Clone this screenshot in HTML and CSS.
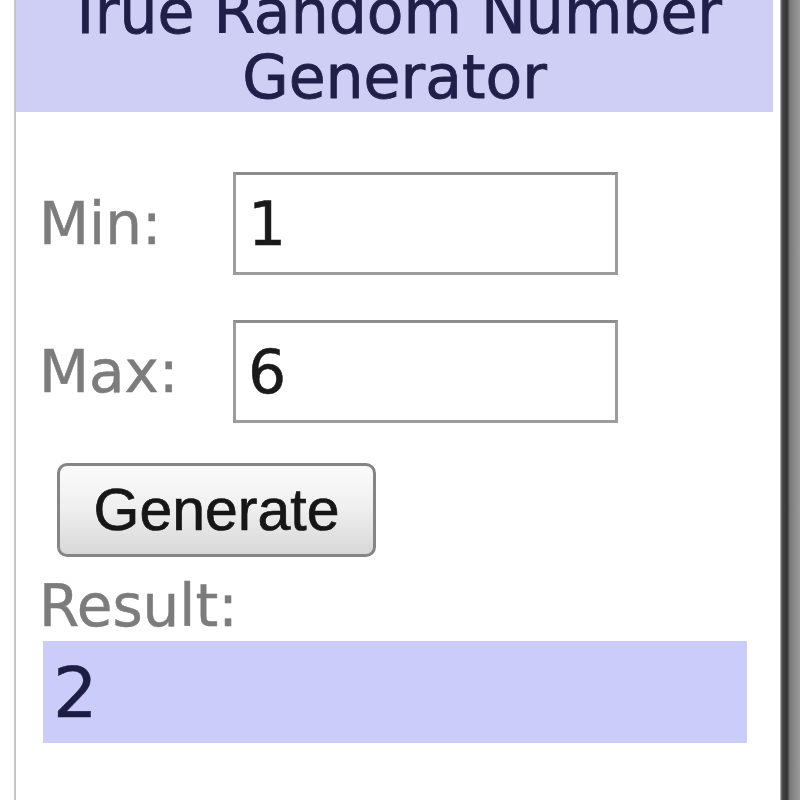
FILE: index.html
```html
<!DOCTYPE html>
<html lang="en">
<head>
    <meta charset="UTF-8">
    <title>True Random Number Generator</title>
    <link rel="stylesheet" href="styles.css">
</head>
<body>
    <div class="page">
        <div class="widget">
            <div class="header">
                <h1>True Random Number<br>Generator</h1>
            </div>

            <div class="fields">
                <label for="min">Min:</label>
                <input type="text" id="min" value="1">

                <label for="max">Max:</label>
                <input type="text" id="max" value="6">
            </div>

            <button class="generate">Generate</button>

            <div class="result-label">Result:</div>
            <div class="result">2</div>
        </div>
        <div class="edge"></div>
    </div>
</body>
</html>
```

FILE: styles.css
```css
:root {
    --header-bg: #cfcff6;
    --result-bg: #ccccfa;
    --title-color: #1f1f48;
    --label-color: #7c7c7c;
    --input-border: #9c9c9c;
}

body {
    margin: 0;
    background-color: #ffffff;
    font-family: 'DejaVu Sans', Verdana, sans-serif;
    overflow: hidden;
}

.page {
    display: flex;
    height: 800px;
    padding-left: 14px;
}

.widget {
    width: 757px;
    padding-right: 7px;
    border-left: 2px solid #c6c6c6;
    background-color: #ffffff;
}

.edge {
    flex: 1;
    background: linear-gradient(to right, #d0d0d0 0, #4a4a4a 2px, #333333 7px, #7a7a7a 10px, #9a9a9a 20px);
}

.header {
    height: 112px;
    background-color: var(--header-bg);
    display: flex;
    align-items: flex-end;
    justify-content: center;
    overflow: hidden;
}

.header h1 {
    margin: 0 0 2px;
    font-size: 60px;
    font-weight: normal;
    line-height: 65px;
    text-align: center;
    color: var(--title-color);
    -webkit-text-stroke: 0.8px var(--title-color);
    white-space: nowrap;
}

.fields {
    display: grid;
    grid-template-columns: 190px 385px;
    row-gap: 45px;
    align-items: center;
    margin: 60px 0 0 27px;
}

.fields label {
    font-size: 58px;
    color: var(--label-color);
    -webkit-text-stroke: 0.5px var(--label-color);
    margin-left: -4px;
}

.fields input {
    box-sizing: border-box;
    height: 103px;
    width: 385px;
    padding: 0 12px;
    border: 3px solid var(--input-border);
    border-top-color: #8c8c8c;
    font-family: 'DejaVu Sans', Verdana, sans-serif;
    font-size: 60px;
    color: #1a1a1a;
    -webkit-text-stroke: 0.5px #1a1a1a;
    outline: none;
}

.generate {
    display: block;
    box-sizing: border-box;
    width: 319px;
    height: 94px;
    margin: 40px 0 0 41px;
    border: 3px solid #858585;
    border-radius: 10px;
    background: linear-gradient(to bottom, #fbfbfb 0%, #f0f0f0 45%, #d8d8d8 100%);
    font-family: 'Liberation Sans', Arial, sans-serif;
    font-size: 59px;
    color: #161616;
    -webkit-text-stroke: 0.7px #161616;
    padding: 0;
}

.result-label {
    margin: 16px 0 0 23px;
    font-size: 58px;
    line-height: 66px;
    color: var(--label-color);
    -webkit-text-stroke: 0.5px var(--label-color);
}

.result {
    box-sizing: border-box;
    width: 704px;
    height: 102px;
    margin: 2px 0 0 27px;
    padding: 12px 0 0 10px;
    background-color: var(--result-bg);
    font-size: 70px;
    line-height: 80px;
    color: #1c1c44;
    -webkit-text-stroke: 0.5px #1c1c44;
}
```
